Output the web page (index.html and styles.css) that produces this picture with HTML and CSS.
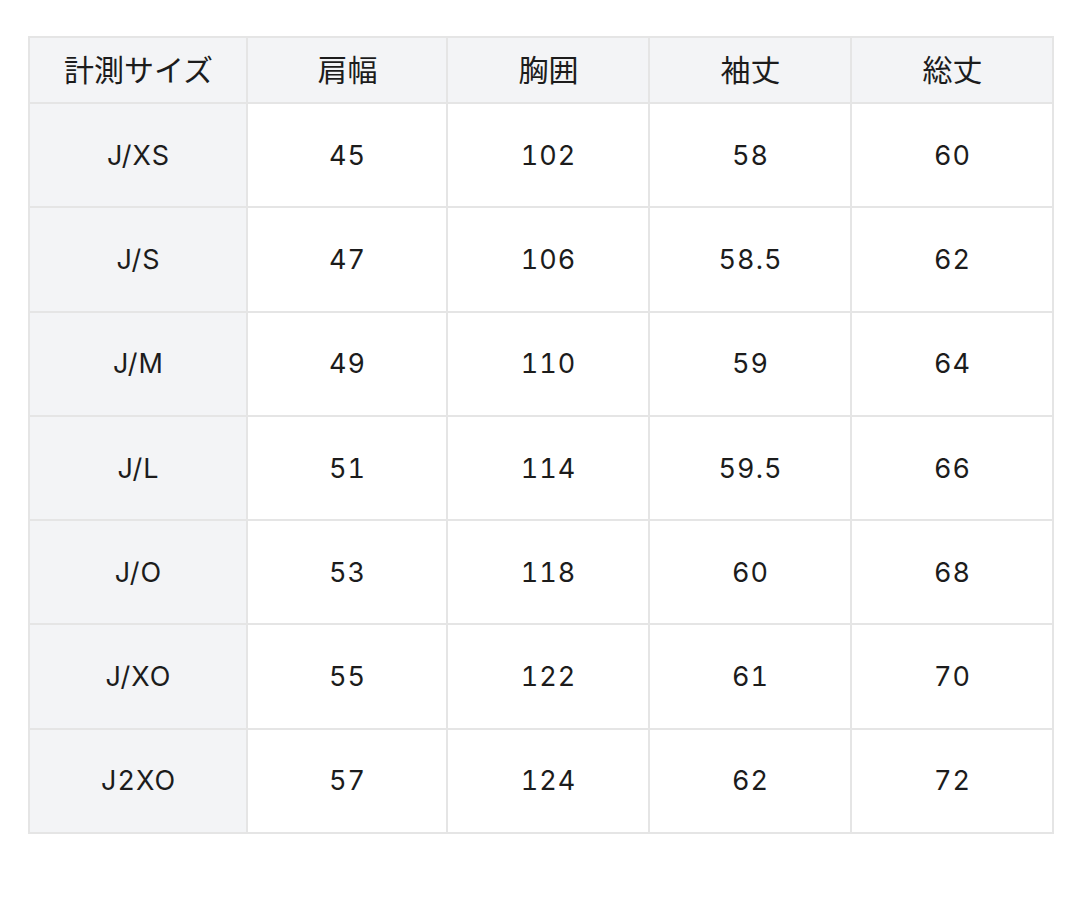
FILE: index.html
```html
<!DOCTYPE html>
<html lang="ja">
<head>
<meta charset="utf-8">
<link rel="stylesheet" href="styles.css">
</head>
<body>
<div class="table">
  <div class="cell head">計測サイズ</div>
  <div class="cell head">肩幅</div>
  <div class="cell head">胸囲</div>
  <div class="cell head">袖丈</div>
  <div class="cell head">総丈</div>

  <div class="cell label">J/XS</div><div class="cell">45</div><div class="cell">102</div><div class="cell">58</div><div class="cell">60</div>
  <div class="cell label">J/S</div><div class="cell">47</div><div class="cell">106</div><div class="cell">58.5</div><div class="cell">62</div>
  <div class="cell label">J/M</div><div class="cell">49</div><div class="cell">110</div><div class="cell">59</div><div class="cell">64</div>
  <div class="cell label">J/L</div><div class="cell">51</div><div class="cell">114</div><div class="cell">59.5</div><div class="cell">66</div>
  <div class="cell label">J/O</div><div class="cell">53</div><div class="cell">118</div><div class="cell">60</div><div class="cell">68</div>
  <div class="cell label">J/XO</div><div class="cell">55</div><div class="cell">122</div><div class="cell">61</div><div class="cell">70</div>
  <div class="cell label">J2XO</div><div class="cell">57</div><div class="cell">124</div><div class="cell">62</div><div class="cell">72</div>
</div>
</body>
</html>
```
FILE: styles.css
```css
html, body {
  margin: 0;
  padding: 0;
  background: #ffffff;
}
body {
  padding: 36px 0 0 28px;
  font-family: Inter, "Noto Sans CJK JP", sans-serif;
  color: #1c1c1c;
}
.table {
  display: grid;
  grid-template-columns: 216px 198px 200px 200px 200px;
  grid-template-rows: 64px repeat(7, 102.3px);
  gap: 2px;
  padding: 2px;
  width: max-content;
  background: #e5e5e5;
}
.cell {
  background: #ffffff;
  display: flex;
  align-items: center;
  justify-content: center;
  font-size: 27px;
  letter-spacing: 1px;
  font-variant-numeric: tabular-nums;
  padding-left: 1px;
}
.head {
  background: #f3f4f6;
  font-family: "Noto Sans CJK JP", sans-serif;
  font-size: 30px;
  letter-spacing: 0;
  padding-bottom: 5px;
}
.label {
  background: #f3f4f6;
}
```
